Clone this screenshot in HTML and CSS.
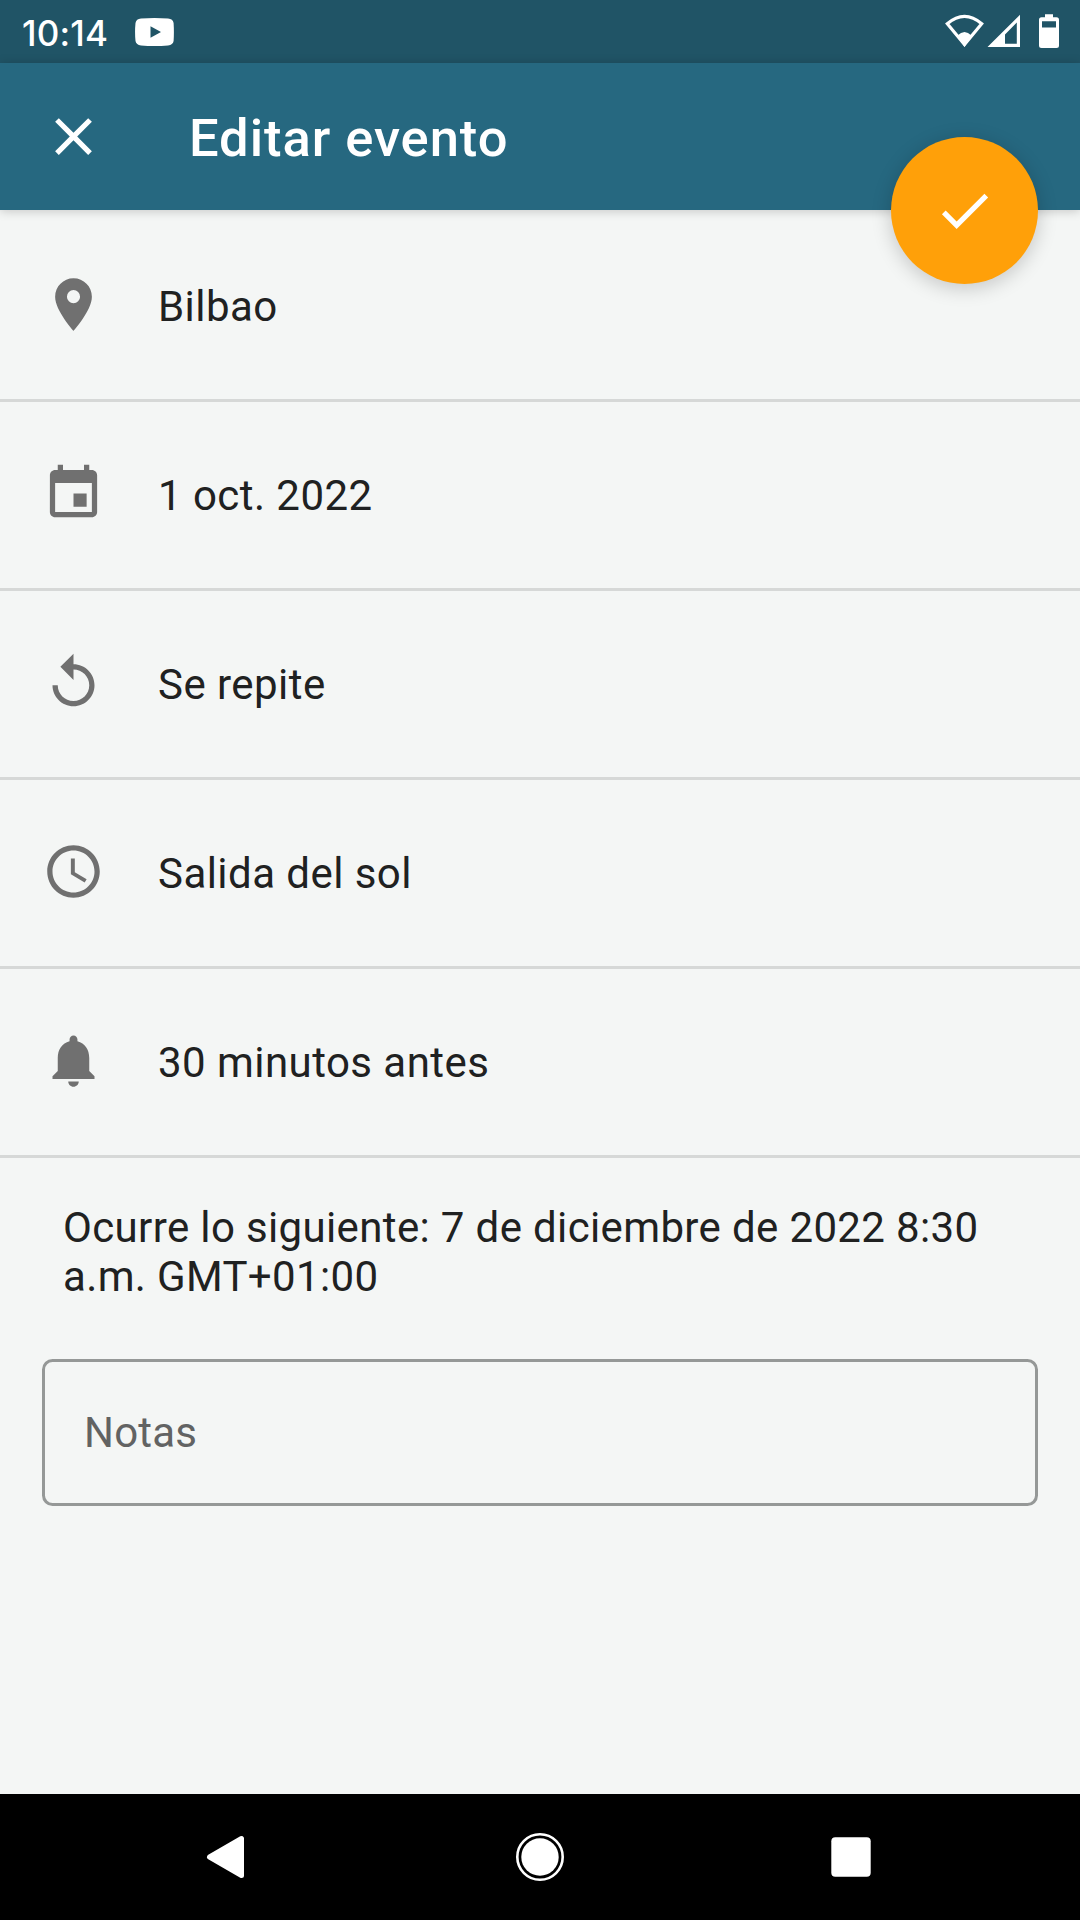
FILE: index.html
```html
<!DOCTYPE html>
<html lang="es">
<head>
<meta charset="utf-8">
<title>Editar evento</title>
<link rel="stylesheet" href="styles.css">
</head>
<body>
<div class="screen">
  <div class="status-bar">
    <span class="clock">10:14</span>
    <svg class="youtube" viewBox="0 0 39 28"><path fill-rule="evenodd" d="M6 .6Q19.500-.4 33 .6Q38 1 38.600 5Q39.200 14 38.600 23Q38 27 33 27.400Q19.500 28.400 6 27.400Q1.200 27 .5 23Q-.4 14 .5 5Q1.200 1 6 .6ZM15.500 8.300V19.700L26 14Z"/></svg>
    <svg class="indicators" viewBox="0 0 115 36">
      <path class="line" d="M2.300 9.700Q19.500-5 36.700 9.700L19.500 30.500Z"/>
      <path d="M12.500 21.500Q19.500 14.500 26.500 21.500L19.500 33Z"/>
      <path fill-rule="evenodd" d="M75 .8V33H42.500ZM71.800 8.500L60 20.500V29.800H71.800Z"/>
      <path fill-rule="evenodd" d="M100 .3H108V3.300H111.500Q114 3.300 114 5.800V31.500Q114 34 111.500 34H96.500Q94 34 94 31.500V5.800Q94 3.300 96.500 3.300H100ZM97 7.200V13.400H111V7.200Z"/>
    </svg>
  </div>
  <header class="app-bar">
    <svg class="icon" viewBox="0 0 24 24"><path d="M19 6.410 17.590 5 12 10.590 6.410 5 5 6.410 10.590 12 5 17.590 6.410 19 12 13.410 17.590 19 19 17.590 13.410 12z"/></svg>
    <h1 class="title">Editar evento</h1>
    <button class="fab" aria-label="Guardar">
      <svg class="icon" viewBox="0 0 24 24"><path d="M9 16.170 4.830 12l-1.420 1.410L9 19 21 7l-1.410-1.410z"/></svg>
    </button>
  </header>
  <main class="content">
    <ul class="fields">
      <li class="row">
        <svg class="icon" viewBox="0 0 24 24"><path d="M12 2C8.130 2 5 5.130 5 9c0 5.250 7 13 7 13s7-7.750 7-13c0-3.870-3.130-7-7-7zm0 9.500a2.500 2.500 0 1 1 0-5 2.500 2.500 0 0 1 0 5z"/></svg>
        <span>Bilbao</span>
      </li>
      <li class="row">
        <svg class="icon" viewBox="0 0 24 24"><path d="M17 12h-5v5h5v-5zM16 1v2H8V1H6v2H5c-1.110 0-1.990.9-1.990 2L3 19c0 1.100.89 2 2 2h14c1.100 0 2-.9 2-2V5c0-1.100-.9-2-2-2h-1V1h-2zm3 18H5V8h14v11z"/></svg>
        <span>1 oct. 2022</span>
      </li>
      <li class="row">
        <svg class="icon" viewBox="0 0 24 24"><path d="M12 5V1L7 6l5 5V7c3.310 0 6 2.690 6 6s-2.690 6-6 6-6-2.690-6-6H4c0 4.420 3.580 8 8 8s8-3.580 8-8-3.580-8-8-8z"/></svg>
        <span>Se repite</span>
      </li>
      <li class="row">
        <svg class="icon" viewBox="0 0 24 24"><path d="M11.990 2C6.470 2 2 6.480 2 12s4.470 10 9.990 10C17.520 22 22 17.520 22 12S17.520 2 11.990 2zM12 20c-4.420 0-8-3.580-8-8s3.580-8 8-8 8 3.580 8 8-3.580 8-8 8zm.5-13H11v6l5.250 3.150.75-1.230-4.500-2.670z"/></svg>
        <span>Salida del sol</span>
      </li>
      <li class="row">
        <svg class="icon" viewBox="0 0 24 24"><path d="M12 22c1.100 0 2-.9 2-2h-4c0 1.100.89 2 2 2zm6-6v-5c0-3.070-1.640-5.640-4.500-6.320V4c0-.83-.67-1.500-1.500-1.500s-1.500.67-1.500 1.500v.68C7.630 5.360 6 7.920 6 11v5l-2 2v1h16v-1l-2-2z"/></svg>
        <span>30 minutos antes</span>
      </li>
    </ul>
    <p class="summary">Ocurre lo siguiente: 7 de diciembre de 2022 8:30 a.m. GMT+01:00</p>
    <div class="notes">Notas</div>
  </main>
  <nav class="nav-bar">
    <svg class="nav-icon" viewBox="0 0 50 50"><path class="back" d="M8.500 25L40.500 6.500V43.500Z"/></svg>
    <svg class="nav-icon" viewBox="0 0 50 50"><circle class="ring" cx="25" cy="25" r="22.700"/><circle cx="25" cy="25" r="18.700"/></svg>
    <svg class="nav-icon" viewBox="0 0 50 50"><rect x="5.300" y="5.300" width="39.400" height="39.400" rx="4"/></svg>
  </nav>
</div>
</body>
</html>
```
FILE: styles.css
```css
* {
  box-sizing: border-box;
}

body {
  margin: 0;
  background: #f4f6f5;
  color: #202121;
  font-family: Roboto, sans-serif;
  font-size: 42px;
  line-height: 49px;
  letter-spacing: 0.45px;
}

.screen {
  display: flex;
  flex-direction: column;
  width: 1080px;
  height: 1920px;
  overflow: hidden;
}

svg {
  display: block;
  flex: none;
  fill: currentColor;
}

.icon {
  width: 63px;
  height: 63px;
}

.status-bar {
  display: flex;
  align-items: flex-start;
  height: 63px;
  padding: 14px 20px 0 22px;
  background: #205466;
  color: #fff;
}

.clock {
  width: 113px;
  padding-top: 1px;
  font-family: Inter, sans-serif;
  font-size: 35px;
  font-weight: 500;
  line-height: 36px;
  letter-spacing: 0.2px;
}

.youtube {
  width: 39px;
  height: 28px;
  margin-top: 4px;
}

.indicators {
  width: 115px;
  height: 36px;
  margin-left: auto;
}

.line {
  fill: none;
  stroke: currentColor;
  stroke-width: 3.2;
}

.app-bar {
  position: relative;
  z-index: 1;
  display: flex;
  align-items: center;
  gap: 84px;
  height: 147px;
  padding: 0 42px;
  background: #266880;
  box-shadow: 0 1px 10px rgba(0, 0, 0, 0.2);
  color: #fff;
}

.title {
  margin: 0;
  padding-top: 3px;
  font-size: 52.5px;
  font-weight: 500;
  line-height: 62px;
  letter-spacing: 0.95px;
}

/* Floats over the lower edge of the app bar. */
.fab {
  position: absolute;
  right: 42px;
  bottom: -74px;
  display: grid;
  place-items: center;
  width: 147px;
  height: 147px;
  padding: 0;
  border: 0;
  border-radius: 50%;
  background: #ffa009;
  box-shadow: 0 4px 20px rgba(0, 0, 0, 0.2);
  color: #fff;
}

.content {
  flex: 1;
}

.fields {
  margin: 0;
  padding: 3px 0 0;
  list-style: none;
}

.row {
  display: flex;
  align-items: center;
  gap: 53px;
  height: 189px;
  padding: 0 42px;
  border-bottom: 3px solid #d6d8d7;
}

.row .icon {
  margin-bottom: 4px;
  color: #707070;
}

.summary {
  margin: 0;
  padding: 45px 63px 58px;
  letter-spacing: 0.36px;
}

.notes {
  display: flex;
  align-items: center;
  height: 147px;
  margin: 0 42px;
  padding: 0 39px;
  border: 3px solid #959897;
  border-radius: 10.5px;
  color: #626363;
  letter-spacing: 0.2px;
}

.nav-bar {
  display: grid;
  grid-template-columns: 50px 50px 50px;
  align-content: center;
  justify-content: space-between;
  height: 126px;
  padding: 0 204px 0 201px;
  background: #000;
  color: #fff;
}

.nav-icon {
  width: 50px;
  height: 50px;
}

.nav-icon:nth-child(2) {
  margin-left: 1px;
}

.back {
  stroke: currentColor;
  stroke-width: 5;
  stroke-linejoin: round;
}

.ring {
  fill: none;
  stroke: currentColor;
  stroke-width: 2.6;
}
```
